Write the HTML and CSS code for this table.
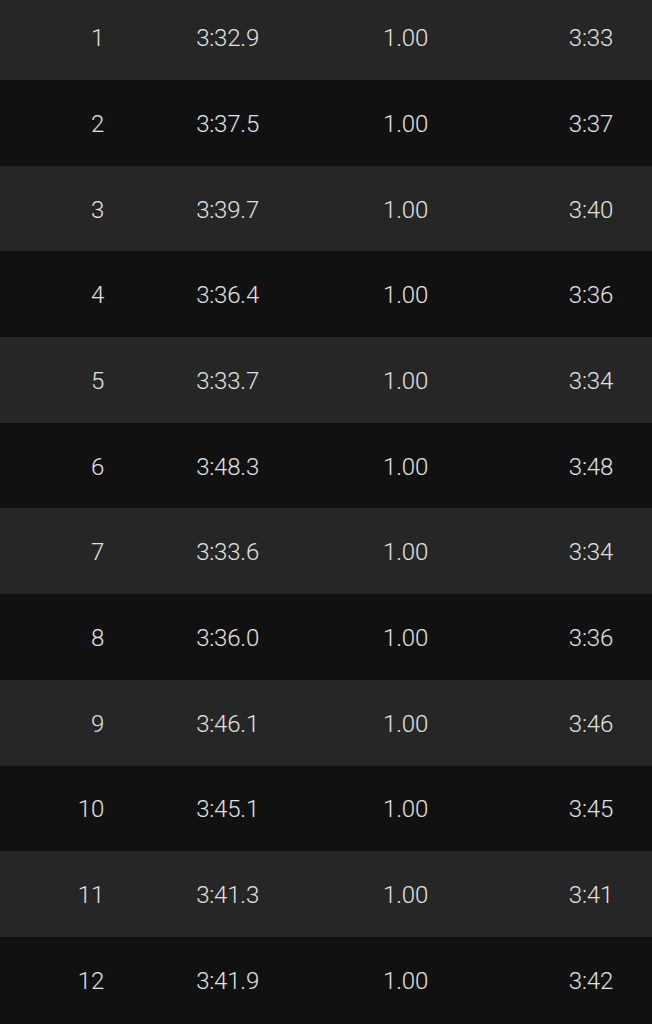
FILE: index.html
```html
<!DOCTYPE html>
<html>
<head>
<meta charset="utf-8">
<link rel="stylesheet" href="styles.css">
</head>
<body>
<div class="table">
  <div class="row light"><span class="c1">1</span><span class="c2">3:32.9</span><span class="c3">1.00</span><span class="c4">3:33</span></div>
  <div class="row dark"><span class="c1">2</span><span class="c2">3:37.5</span><span class="c3">1.00</span><span class="c4">3:37</span></div>
  <div class="row light"><span class="c1">3</span><span class="c2">3:39.7</span><span class="c3">1.00</span><span class="c4">3:40</span></div>
  <div class="row dark"><span class="c1">4</span><span class="c2">3:36.4</span><span class="c3">1.00</span><span class="c4">3:36</span></div>
  <div class="row light"><span class="c1">5</span><span class="c2">3:33.7</span><span class="c3">1.00</span><span class="c4">3:34</span></div>
  <div class="row dark"><span class="c1">6</span><span class="c2">3:48.3</span><span class="c3">1.00</span><span class="c4">3:48</span></div>
  <div class="row light"><span class="c1">7</span><span class="c2">3:33.6</span><span class="c3">1.00</span><span class="c4">3:34</span></div>
  <div class="row dark"><span class="c1">8</span><span class="c2">3:36.0</span><span class="c3">1.00</span><span class="c4">3:36</span></div>
  <div class="row light"><span class="c1">9</span><span class="c2">3:46.1</span><span class="c3">1.00</span><span class="c4">3:46</span></div>
  <div class="row dark"><span class="c1">10</span><span class="c2">3:45.1</span><span class="c3">1.00</span><span class="c4">3:45</span></div>
  <div class="row light"><span class="c1">11</span><span class="c2">3:41.3</span><span class="c3">1.00</span><span class="c4">3:41</span></div>
  <div class="row dark"><span class="c1">12</span><span class="c2">3:41.9</span><span class="c3">1.00</span><span class="c4">3:42</span></div>
</div>
</body>
</html>
```
FILE: styles.css
```css
html, body {
  margin: 0;
  padding: 0;
  background: #111111;
  overflow: hidden;
}
.table {
  display: flex;
  flex-direction: column;
  margin-top: -5.7px;
  font-family: Roboto, "Liberation Sans", sans-serif;
  font-weight: 300;
  font-size: 24px;
  letter-spacing: -0.2px;
  color: #e2e2e2;
}
.row {
  box-sizing: border-box;
  height: 85.7px;
  padding-top: 2px;
  display: grid;
  grid-template-columns: 104px 155px 169px 185px;
  align-items: center;
  text-align: right;
}
.light { background: #262626; }
.dark { background: #111111; }
.row span { line-height: 1; }
```
